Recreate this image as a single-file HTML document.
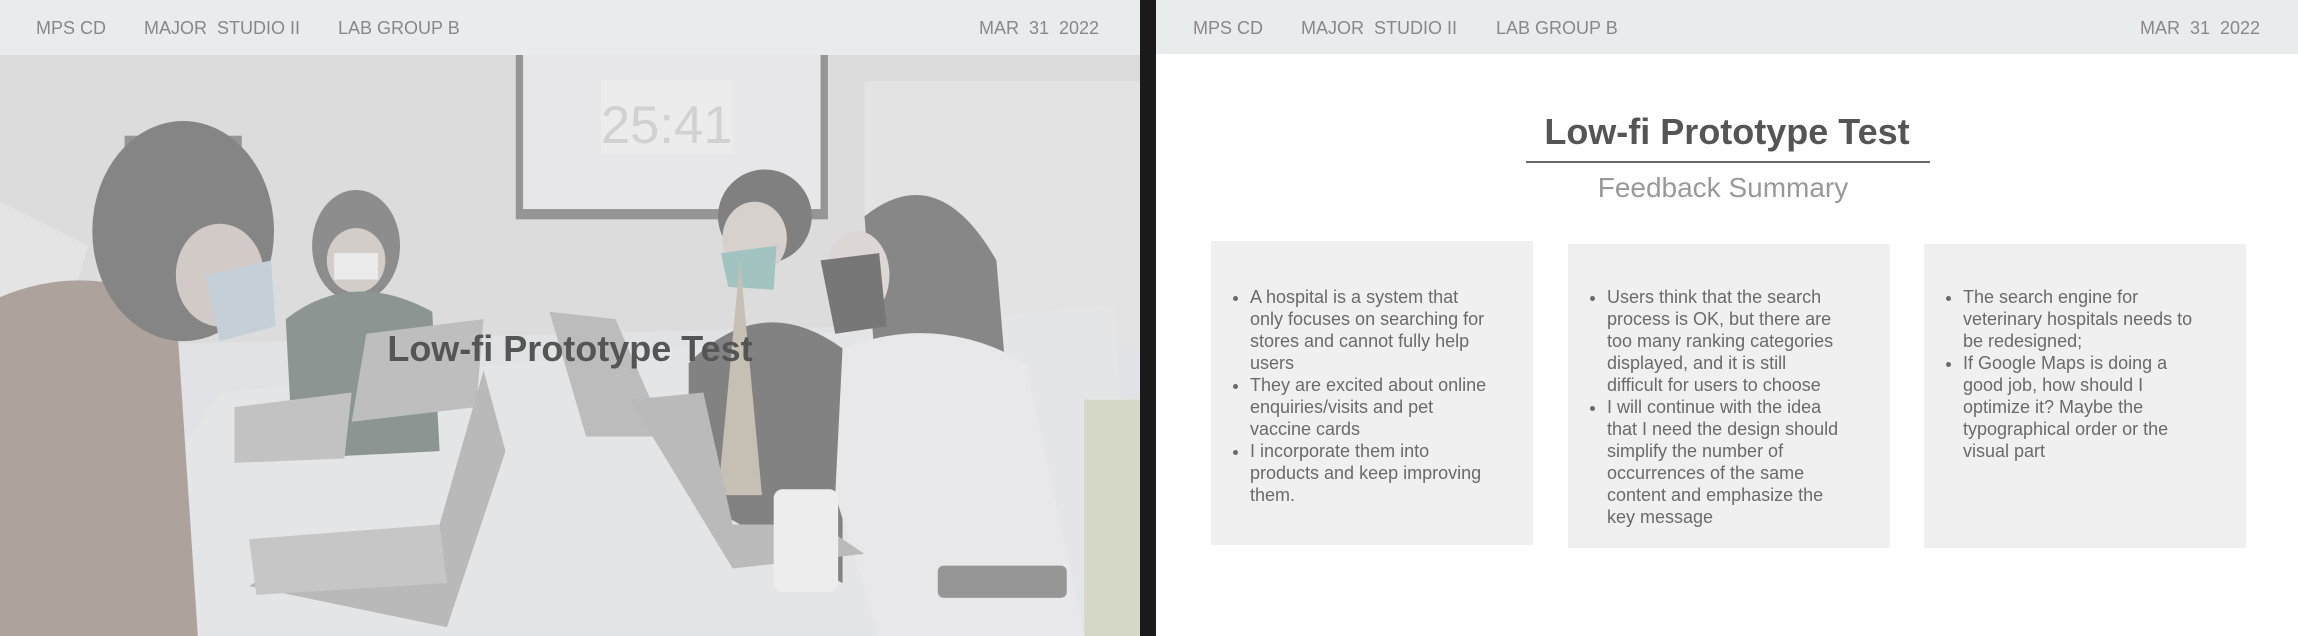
<!DOCTYPE html>
<html><head><meta charset="utf-8"><style>
*{margin:0;padding:0;box-sizing:border-box}
body{width:2298px;height:636px;overflow:hidden;background:#1a1a1a;font-family:"Liberation Sans",sans-serif;position:relative}
.hdr{position:absolute;top:0;height:55px;background:#e9ecec;color:#888;font-size:18px}
.hdr span{position:absolute;top:18px;white-space:pre}
.left{position:absolute;left:0;top:0;width:1140px;height:636px;overflow:hidden}
.right{position:absolute;left:1156px;top:0;width:1142px;height:636px;background:#fff}
.card{position:absolute;background:#f0f0f0;color:#6a6a6a;font-size:18px;line-height:22px}
.card ul{position:absolute;left:39px;top:45px;width:300px;white-space:nowrap}
</style></head><body>
<div class="left">
<svg style="position:absolute;left:0;top:55px" width="1140" height="581" viewBox="0 0 778 396" preserveAspectRatio="none">
<rect width="778" height="396" fill="#d8d8d6"/>
<polygon points="0,200 778,180 778,396 0,396" fill="#dfe1e3"/>
<rect x="352" y="0" width="213" height="112" fill="#6a6a6a"/>
<rect x="357" y="0" width="203" height="105" fill="#e9e9ec"/>
<rect x="410" y="17" width="90" height="50" fill="#f0f0f0"/>
<text x="455" y="60" font-size="36" text-anchor="middle" fill="#c6c6c6" font-family="Liberation Sans">25:41</text>
<rect x="590" y="18" width="188" height="180" fill="#e2e2e2"/>
<rect x="85" y="55" width="80" height="60" fill="#6a6a6a"/>
<polygon points="0,100 60,130 40,200 0,210" fill="#e4e4e4"/>
<polygon points="150,230 760,170 778,396 40,396" fill="#e3e5e7"/>
<ellipse cx="243" cy="130" rx="30" ry="38" fill="#5e5e5e"/>
<ellipse cx="243" cy="140" rx="20" ry="22" fill="#c9c0bb"/>
<rect x="228" y="135" width="30" height="18" fill="#eeeeee"/>
<path d="M195,180 Q240,145 295,175 L300,270 L200,275Z" fill="#5d6a63"/>
<path d="M0,165 Q60,140 120,170 L135,396 L0,396Z" fill="#8f7f73"/>
<ellipse cx="125" cy="120" rx="62" ry="75" fill="#525252"/>
<ellipse cx="150" cy="150" rx="30" ry="35" fill="#c8bcb4"/>
<path d="M140,150 L185,140 L188,185 L150,195Z" fill="#b3c4cf"/>
<path d="M470,210 Q520,160 575,200 L575,360 L470,300Z" fill="#4e4e4e"/>
<ellipse cx="522" cy="110" rx="32" ry="32" fill="#4a4a4a"/>
<ellipse cx="515" cy="125" rx="22" ry="25" fill="#cfc6c0"/>
<path d="M492,135 L530,130 L528,160 L497,158Z" fill="#7fb3ad"/>
<path d="M505,140 L520,300 L490,300Z" fill="#b6ab98"/>
<path d="M590,110 Q640,70 680,140 L690,260 L600,250Z" fill="#555"/>
<ellipse cx="585" cy="150" rx="22" ry="30" fill="#d8cfca"/>
<path d="M560,140 L600,135 L605,185 L570,190Z" fill="#3d3d3d"/>
<path d="M575,200 Q640,175 700,210 L740,396 L600,396 L570,300Z" fill="#eaeaec"/>
<polygon points="250,190 330,180 325,240 240,250" fill="#aaaaaa"/>
<polygon points="330,215 345,270 305,390 170,362 220,330 300,320" fill="#a2a2a2"/>
<polygon points="170,330 300,320 305,360 175,368" fill="#b5b5b5"/>
<polygon points="375,175 420,180 455,260 400,260" fill="#a6a6a6"/>
<polygon points="430,235 480,230 500,320 560,320 590,340 500,350" fill="#a4a4a4"/>
<polygon points="160,240 240,230 235,275 160,278" fill="#b0b0b0"/>
<rect x="528" y="296" width="44" height="70" rx="6" fill="#f2f2f2"/>
<rect x="640" y="348" width="88" height="22" rx="4" fill="#6c6c6c"/>
<rect x="740" y="235" width="38" height="161" fill="#cdd2b5"/>
<rect width="778" height="396" fill="#e4e6e8" opacity="0.35"/>
</svg>
<div style="position:absolute;left:0;top:328px;width:1140px;text-align:center;font-size:36px;font-weight:bold;color:#555">Low-fi Prototype Test</div>
<div class="hdr" style="left:0;width:1140px">
<span style="left:36px">MPS CD</span><span style="left:144px">MAJOR  STUDIO II</span><span style="left:338px">LAB GROUP B</span><span style="left:979px">MAR  31  2022</span>
</div>
</div>
<div class="right">
<div class="hdr" style="left:0;width:1142px;height:54px">
<span style="left:37px">MPS CD</span><span style="left:145px">MAJOR  STUDIO II</span><span style="left:340px">LAB GROUP B</span><span style="left:984px">MAR  31  2022</span>
</div>
<div style="position:absolute;left:0;width:1142px;top:111px;text-align:center;font-size:36px;font-weight:bold;color:#555">Low-fi Prototype Test</div>
<div style="position:absolute;left:370px;width:404px;top:161px;height:2px;background:#666"></div>
<div style="position:absolute;left:0;width:1134px;top:172px;text-align:center;font-size:28px;color:#999">Feedback Summary</div>
<div class="card" style="left:55px;top:241px;width:322px;height:304px"><ul>
<li>A hospital is a system that<br>only focuses on searching for<br>stores and cannot fully help<br>users</li>
<li>They are excited about online<br>enquiries/visits and pet<br>vaccine cards</li>
<li>I incorporate them into<br>products and keep improving<br>them.</li></ul></div>
<div class="card" style="left:412px;top:244px;width:322px;height:304px"><ul style="top:42px">
<li>Users think that the search<br>process is OK, but there are<br>too many ranking categories<br>displayed, and it is still<br>difficult for users to choose</li>
<li>I will continue with the idea<br>that I need the design should<br>simplify the number of<br>occurrences of the same<br>content and emphasize the<br>key message</li></ul></div>
<div class="card" style="left:768px;top:244px;width:322px;height:304px"><ul style="top:42px">
<li>The search engine for<br>veterinary hospitals needs to<br>be redesigned;</li>
<li>If Google Maps is doing a<br>good job, how should I<br>optimize it? Maybe the<br>typographical order or the<br>visual part</li></ul></div>
</div>
</body></html>
